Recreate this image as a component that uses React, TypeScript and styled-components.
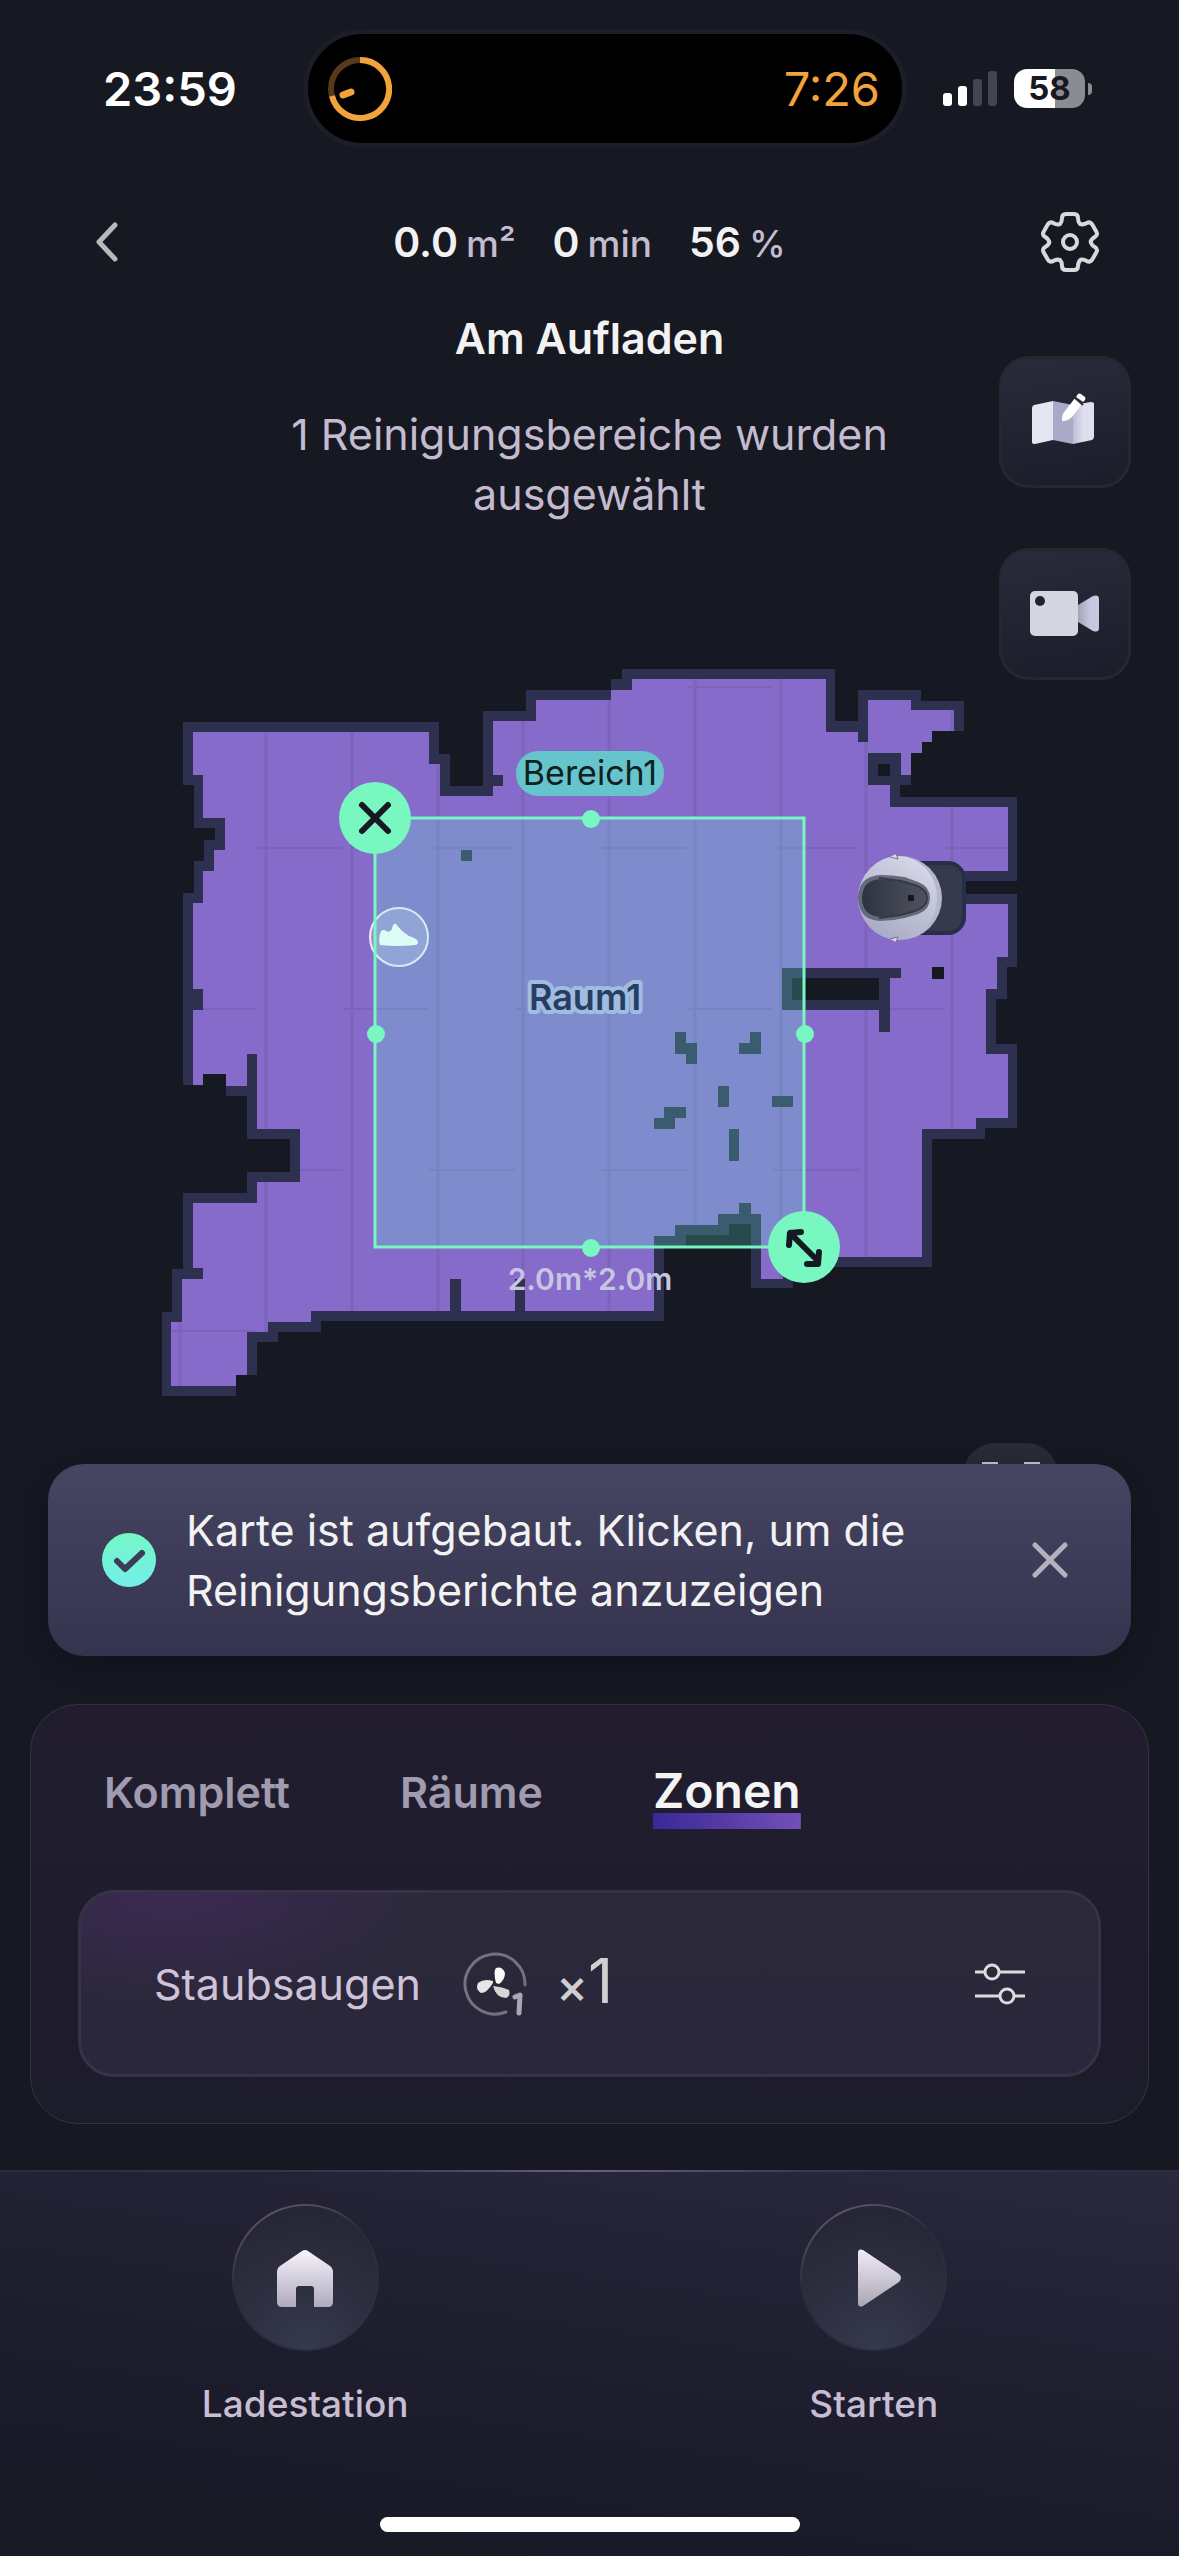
import React, { useState } from "react";
import styled, { createGlobalStyle } from "styled-components";

const GlobalStyle = createGlobalStyle`
  *, *::before, *::after { box-sizing: border-box; }
  body {
    margin: 0;
    background: #161822;
    color: #f2f2f2;
    font-family: Inter, "Liberation Sans", sans-serif;
    -webkit-font-smoothing: antialiased;
  }
  button {
    margin: 0;
    padding: 0;
    border: 0;
    background: none;
    color: inherit;
    font: inherit;
    cursor: pointer;
  }
  svg { display: block; }
  h1, p { margin: 0; }
`;

const Page = styled.div`
  min-height: 100vh;
  display: flex;
  flex-direction: column;
  overflow: hidden;
`;

/* ---------- status bar ---------- */

const StatusBar = styled.div`
  display: flex;
  align-items: center;
  padding: 29px 87px 0 103px;
`;

const Clock = styled.time`
  font-size: 47px;
  font-weight: 600;
  line-height: 60px;
  color: #fff;
`;

const Island = styled.div`
  flex: 1;
  display: flex;
  align-items: center;
  justify-content: space-between;
  height: 119px;
  margin: 0 36px 0 66px;
  padding: 0 22px 0 20px;
  border: 5px solid #1b1d29;
  border-radius: 60px;
  background: #000;
`;

const Countdown = styled.span`
  font-size: 47px;
  line-height: 60px;
  color: #f2a33c;
`;

const Signals = styled.div`
  display: flex;
  align-items: center;
  gap: 17px;
`;

const BatteryGroup = styled.div`
  display: flex;
  align-items: center;
  gap: 3px;
`;

const Battery = styled.div`
  width: 71px;
  height: 39px;
  border-radius: 13px;
  background: linear-gradient(90deg, #fff 58%, #8b8c91 58%);
  color: #161822;
  font-size: 33px;
  font-weight: 700;
  line-height: 39px;
  text-align: center;
`;

const BatteryNub = styled.div`
  width: 4px;
  height: 12px;
  border-radius: 0 6px 6px 0;
  background: #8b8c91;
`;

/* ---------- header ---------- */

const Header = styled.header`
  display: grid;
  grid-template-columns: 1fr auto 1fr;
  align-items: center;
  height: 60px;
  margin-top: 64px;
  padding: 0 79px;
`;

const BackButton = styled.button`
  justify-self: start;
  padding-left: 15px;
`;

const SettingsButton = styled.button`
  justify-self: end;
`;

const Stats = styled.div`
  display: flex;
  gap: 37px;
`;

const Stat = styled.div`
  display: flex;
  align-items: baseline;
  gap: 8px;
  font-size: 41px;
  font-weight: 600;
  line-height: 60px;
`;

const Unit = styled.span`
  font-size: 37px;
  font-weight: 500;
  line-height: 48px;
  color: #c4bbd0;
`;

/* ---------- map area ---------- */

const MapArea = styled.main`
  position: relative;
  padding-top: 36px;
`;

const Title = styled.h1`
  font-size: 43px;
  font-weight: 600;
  line-height: 60px;
  text-align: center;
`;

const Subtitle = styled.p`
  max-width: 660px;
  margin: 36px auto 126px;
  font-size: 43px;
  line-height: 60px;
  text-align: center;
  color: #c4bbd0;
`;

const FloorPlan = styled.svg`
  width: 100%;
  height: auto;
  font-family: Inter, "Liberation Sans", sans-serif;
`;

const MapTools = styled.div`
  position: absolute;
  top: 84px;
  right: 48px;
  display: flex;
  flex-direction: column;
  gap: 60px;
`;

const ToolButton = styled.button`
  display: grid;
  place-items: center;
  width: 132px;
  height: 132px;
  border: 3px solid #252733;
  border-radius: 30px;
  background: linear-gradient(170deg, #292b3a, #1b1d2a);
`;

const FitButton = styled.button`
  position: absolute;
  right: 121px;
  bottom: -74px;
  display: grid;
  place-items: center;
  width: 95px;
  height: 95px;
  border-radius: 32px;
  background: #292b37;
`;

/* ---------- toast ---------- */

const Toast = styled.div`
  position: relative;
  display: flex;
  align-items: center;
  gap: 30px;
  margin: 0 48px;
  padding: 36px 63px 36px 54px;
  border-radius: 36px;
  background: linear-gradient(180deg, #464562, #35334e);
  box-shadow: 0 12px 36px rgba(8, 9, 16, 0.35);
`;

const ToastText = styled.p`
  flex: 1;
  max-width: 780px;
  font-size: 43px;
  line-height: 60px;
`;

const CloseButton = styled.button`
  margin-left: auto;
`;

/* ---------- mode panel ---------- */

const Panel = styled.section`
  margin: 48px 30px 0;
  padding: 56px 47px 46px;
  border: 1px solid #353441;
  border-radius: 48px;
  background: linear-gradient(180deg, #211d2f, #1d1c2b);
`;

const Tabs = styled.div`
  display: flex;
  align-items: baseline;
  gap: 110px;
  padding-left: 26px;
`;

const Tab = styled.button<{ $active: boolean }>`
  padding-bottom: ${(p) => (p.$active ? 8 : 0)}px;
  font-size: ${(p) => (p.$active ? 48 : 43)}px;
  font-weight: 600;
  line-height: 60px;
  color: ${(p) => (p.$active ? "#f4f4f4" : "#a19bb0")};
  background: ${(p) =>
    p.$active
      ? "linear-gradient(90deg, #3a2897, #7350b8) bottom / 100% 16px no-repeat"
      : "none"};
`;

const ModeCard = styled.div`
  display: flex;
  align-items: center;
  height: 187px;
  margin-top: 61px;
  padding: 0 73px;
  border: 3px solid #383148;
  border-radius: 36px;
  background:
    radial-gradient(ellipse 260px 110px at 92px 0, #3c2a54, rgba(60, 42, 84, 0)),
    linear-gradient(180deg, #2b2939, #2b263c);
`;

const ModeName = styled.span`
  margin-right: 41px;
  font-size: 43px;
  line-height: 60px;
  color: #cfc3da;
`;

const Repeat = styled.span`
  display: flex;
  align-items: baseline;
  margin-left: 28px;
  font-size: 62px;
  line-height: 72px;
  color: #cfcfcf;
`;

const Times = styled.span`
  font-size: 48px;
  font-weight: 500;
`;

const AdjustButton = styled.button`
  margin-left: auto;
`;

/* ---------- bottom bar ---------- */

const BottomBar = styled.footer`
  flex: 1;
  margin-top: 46px;
  border-top: 2px solid;
  border-image: linear-gradient(90deg, #2f2940, #3c3350 30%, #6d5d7c 50%, #3c3350 70%, #2f2940) 1;
  background: linear-gradient(188deg, #29283d, #1d1d2d 55%, #171925 90%);
`;

const Actions = styled.nav`
  display: grid;
  grid-template-columns: 1fr 1fr;
  padding: 32px 21px 0;
`;

const Action = styled.button`
  display: flex;
  flex-direction: column;
  align-items: center;
  gap: 29px;
  font-size: 37px;
  font-weight: 500;
  line-height: 48px;
  color: #c8bdd3;
`;

const Disc = styled.span`
  display: grid;
  place-items: center;
  width: 147px;
  height: 147px;
  border: 2px solid transparent;
  border-radius: 50%;
  background:
    radial-gradient(circle at 50% 100%, #363a4e, #2a2b3b 60%, #242433) padding-box,
    linear-gradient(155deg, #5b5669 10%, #2a2a3b 40%, #303347) border-box;
`;

const HomeIndicator = styled.div`
  width: 420px;
  height: 15px;
  margin: 89px auto 24px;
  border-radius: 8px;
  background: #fff;
`;

/* ---------- floor plan data ---------- */

const WALL =
  "183,722 439,722 439,754 450,754 450,786 483,786 483,711 526,711 526,690 611,690 611,679 622,679 622,669 835,669 835,721 858,721 858,690 921,690 921,701 964,701 964,731 932,731 932,742 922,742 922,753 911,753 911,785 900,785 900,797 1017,797 1017,881 950,881 950,894 1017,894 1017,967 1007,967 1007,999 996,999 996,1044 1017,1044 1017,1128 985,1128 985,1139 932,1139 932,1267 793,1267 793,1288 751,1288 751,1224 729,1224 729,1235 686,1235 686,1246 664,1246 664,1321 321,1321 321,1332 278,1332 278,1342 257,1342 257,1375 236,1375 236,1396 162,1396 162,1312 172,1312 172,1269 183,1269 183,1193 247,1193 247,1172 290,1172 290,1139 247,1139 247,1096 226,1096 226,1074 203,1074 203,1085 183,1085 183,893 194,893 194,861 204,861 204,840 215,840 215,828 194,828 194,785 183,785";

const FLOOR =
  "193,732 429,732 429,764 440,764 440,796 493,796 493,721 536,721 536,700 611,700 611,690 632,690 632,679 826,679 826,732 858,732 858,742 868,742 868,700 911,700 911,710 954,710 954,731 932,731 932,742 922,742 922,753 911,753 911,775 901,775 901,753 868,753 868,785 890,785 890,807 1008,807 1008,871 930,871 930,904 1008,904 1008,957 997,957 997,989 986,989 986,1054 1008,1054 1008,1118 976,1118 976,1129 922,1129 922,1257 783,1257 783,1279 761,1279 761,1214 751,1214 751,1203 739,1203 739,1214 718,1214 718,1225 675,1225 675,1236 654,1236 654,1311 311,1311 311,1322 268,1322 268,1332 247,1332 247,1375 236,1375 236,1386 171,1386 171,1322 182,1322 182,1279 203,1279 203,1268 193,1268 193,1203 257,1203 257,1182 300,1182 300,1129 257,1129 257,1054 247,1054 247,1086 226,1086 226,1074 203,1074 203,1085 193,1085 193,1010 203,1010 203,989 193,989 193,903 203,903 203,871 214,871 214,850 225,850 225,818 203,818 203,775 193,775";

// [x, y, width, height]
const OBSTACLES = [
  [493, 775, 10, 11],
  [450, 1279, 11, 32],
  [515, 1279, 10, 32],
  [782, 968, 108, 42],
  [879, 968, 22, 10],
  [879, 1000, 11, 32],
  [461, 850, 11, 11],
  [675, 1032, 11, 22],
  [686, 1043, 11, 21],
  [750, 1032, 11, 22],
  [739, 1043, 11, 11],
  [718, 1086, 11, 21],
  [772, 1096, 21, 11],
  [664, 1107, 22, 11],
  [654, 1118, 21, 11],
  [729, 1129, 10, 32],
];

const VOIDS = [
  [878, 764, 12, 12],
  [792, 978, 87, 22],
  [932, 967, 12, 12],
];

const PLANK_SEAMS = [180, 266, 352, 438, 523, 609, 695, 781, 866, 952];
const PLANK_ENDS: [number, number][] = [
  [687, 171],
  [848, 257],
  [1009, 171],
  [1170, 257],
  [1331, 171],
];

const MINT = "#79f7c1";

function Plan() {
  return (
    <FloorPlan viewBox="0 650 1179 814" role="img" aria-label="Karte mit Raum1 und Bereich1">
      <defs>
        <clipPath id="floor">
          <polygon points={FLOOR} />
        </clipPath>
        <linearGradient id="shell" x1="0.8" y1="0" x2="0.2" y2="1">
          <stop offset="0" stopColor="#d8d9e8" />
          <stop offset="1" stopColor="#a5a8c2" />
        </linearGradient>
        <linearGradient id="visor" x1="0" y1="0" x2="1" y2="0">
          <stop offset="0" stopColor="#2d3240" />
          <stop offset="1" stopColor="#50535f" />
        </linearGradient>
      </defs>

      <polygon points={WALL} fill="#2d304e" />
      <polygon points={FLOOR} fill="#866bca" />
      <g clipPath="url(#floor)" stroke="#7c64ba" strokeWidth="3">
        {PLANK_SEAMS.map((x) => (
          <line key={x} x1={x} y1="660" x2={x} y2="1400" />
        ))}
        {PLANK_ENDS.map(([y, x]) => (
          <line key={y} x1={x} y1={y} x2="1020" y2={y} strokeWidth="2" strokeDasharray="86 86" />
        ))}
      </g>
      {OBSTACLES.map(([x, y, w, h]) => (
        <rect key={`${x}-${y}`} x={x} y={y} width={w} height={h} fill="#2d304e" />
      ))}
      {VOIDS.map(([x, y, w, h]) => (
        <rect key={`${x}-${y}`} x={x} y={y} width={w} height={h} fill="#161822" />
      ))}

      {/* doorstep marker */}
      <circle cx="399" cy="937" r="29" fill="#fff" fillOpacity="0.22" stroke="#f4ecfb" strokeWidth="2" />
      <path
        d="M381 931q3-2 5 0 4 2 6-2 1-6 4-5 5 7 13 12 9 3 9 6 0 3-3 3-18 2-35 0-2-7 1-14z"
        fill="#fff"
      />

      {/* room name */}
      <text
        x="585"
        y="1010"
        textAnchor="middle"
        fontSize="36"
        fontWeight="600"
        fill="#16063f"
        stroke="#b4abe4"
        strokeWidth="8"
        strokeLinejoin="round"
        paintOrder="stroke"
      >
        Raum1
      </text>

      {/* docked robot */}
      <rect x="902" y="863" width="62" height="70" rx="16" fill="#353b4d" stroke="#272f48" strokeWidth="4" />
      <circle cx="900" cy="898" r="42" fill="#b4b7cf" />
      <ellipse cx="898" cy="898" rx="39" ry="42" fill="url(#shell)" />
      <path d="M890 857l8 2-2-5M890 939l8-2-2 5" fill="#d8d9e8" stroke="#6f7390" strokeWidth="1" />
      <path
        d="M862 888q4-10 18-11 12 0 24 2l14 5q10 4 10 14t-10 14l-14 4q-12 3-24 3-14-1-18-11-4-10 0-20z"
        fill="url(#visor)"
        stroke="#646a79"
        strokeWidth="4"
      />
      <path d="M879 878l22 3 14 4q12 4 12 13t-12 13l-14 4-22 3" fill="none" stroke="#363a47" strokeWidth="2" />
      <rect x="908" y="895" width="6" height="6" rx="1" fill="#14161d" />

      {/* selected zone */}
      <rect x="375" y="818" width="429" height="429" fill="rgba(100,247,215,0.23)" stroke={MINT} strokeWidth="3" />
      <circle cx="591" cy="819" r="9" fill={MINT} />
      <circle cx="376" cy="1034" r="9" fill={MINT} />
      <circle cx="805" cy="1034" r="9" fill={MINT} />
      <circle cx="591" cy="1248" r="9" fill={MINT} />

      <rect x="516" y="751" width="148" height="45" rx="22" fill="#66c5cc" />
      <text x="590" y="785" textAnchor="middle" fontSize="34" fill="#10201f">
        Bereich1
      </text>
      <text x="590" y="1290" textAnchor="middle" fontSize="30" fontWeight="600" fill="#c7c6e2">
        2.0m*2.0m
      </text>

      <g>
        <circle cx="375" cy="818" r="36" fill={MINT} />
        <path d="M362 805l26 26M388 805l-26 26" stroke="#161822" strokeWidth="6" strokeLinecap="round" />
      </g>
      <g>
        <circle cx="804" cy="1247" r="36" fill={MINT} />
        <path
          d="M790 1233l28 28M789 1245l1-12 11-1M819 1252l-1 12-11 0"
          fill="none"
          stroke="#161822"
          strokeWidth="6"
          strokeLinecap="round"
          strokeLinejoin="round"
        />
      </g>
    </FloorPlan>
  );
}

/* ---------- icons ---------- */

const TimerRing = () => (
  <svg width="64" height="64" viewBox="0 0 64 64" fill="none" aria-hidden="true">
    <circle cx="32" cy="32" r="29" stroke="#573b18" strokeWidth="6" />
    <path d="M32 3A29 29 0 1 1 4 39" stroke="#f2a33c" strokeWidth="6" />
    <path d="M23 35l-8 3" stroke="#f2a33c" strokeWidth="7" strokeLinecap="round" />
  </svg>
);

const SignalBars = () => (
  <svg width="54" height="35" viewBox="0 0 54 35" aria-label="Mobilfunk 2 von 4">
    <rect x="0" y="22" width="9" height="13" rx="3" fill="#fff" />
    <rect x="15" y="15" width="9" height="20" rx="3" fill="#fff" />
    <rect x="30" y="8" width="9" height="27" rx="3" fill="#44454e" />
    <rect x="45" y="0" width="9" height="35" rx="3" fill="#44454e" />
  </svg>
);

const BackIcon = () => (
  <svg width="26" height="42" viewBox="0 0 26 42" fill="none" aria-hidden="true">
    <path d="M21 4L5 21l16 17" stroke="#b9b9bb" strokeWidth="5" strokeLinecap="round" strokeLinejoin="round" />
  </svg>
);

// One tooth of the gear, pointing up from the centre; six turned copies close the outline.
const TOOTH: [string, number[]][] = [
  ["C", [-8, -20, -8, -22, -8, -24]],
  ["Q", [-8, -28, -4, -28]],
  ["L", [4, -28]],
  ["Q", [8, -28, 8, -24]],
  ["C", [8, -22, 8, -20, 10, -18]],
];

const gearOutline = () => {
  const turn = (points: number[], degrees: number) => {
    const a = (degrees * Math.PI) / 180;
    const out: string[] = [];
    for (let i = 0; i < points.length; i += 2) {
      const [x, y] = [points[i], points[i + 1]];
      out.push(`${x * Math.cos(a) - y * Math.sin(a)} ${x * Math.sin(a) + y * Math.cos(a)}`);
    }
    return out.join(" ");
  };
  let d = "M-10 -18";
  for (let i = 0; i < 6; i++) {
    for (const [command, points] of TOOTH) d += command + turn(points, i * 60);
  }
  return d + "Z";
};

const GEAR = gearOutline();

const GearIcon = () => (
  <svg
    width="60"
    height="60"
    viewBox="-30 -30 60 60"
    fill="none"
    stroke="#d9d9d9"
    strokeWidth="4"
    strokeLinejoin="round"
    aria-hidden="true"
  >
    <path d={GEAR} />
    <circle r="7" />
  </svg>
);

const MapEditIcon = () => (
  <svg width="66" height="58" viewBox="0 0 66 58" aria-hidden="true">
    <defs>
      <linearGradient id="fold" x1="0" x2="1">
        <stop offset="0" stopColor="#bcbdd6" />
        <stop offset="0.5" stopColor="#e0dfee" />
      </linearGradient>
    </defs>
    <path d="M0 15q0-2 2-3l19-4v39L3 51q-3 0-3-2z" fill="#e6e5f2" />
    <path d="M21 8l20 4v39l-20-4z" fill="#a9a9c8" />
    <path d="M41 12l18-3q3 0 3 2v33q0 2-2 3l-19 4z" fill="url(#fold)" />
    <path d="M30 27q0-6 3-9L43 5l7 6-10 13q-3 3-8 4-2 1-2-1z" fill="#fff" />
    <path d="M42 4l9 8" stroke="#2a2c3b" strokeWidth="2" />
    <path d="M46 1q1-1 3 0l4 3q1 1 0 3l-2 2-7-5z" fill="#fff" />
  </svg>
);

const CameraIcon = () => (
  <svg width="70" height="46" viewBox="0 0 70 46" aria-hidden="true">
    <defs>
      <linearGradient id="lens" x1="0" x2="1">
        <stop offset="0" stopColor="#a3a3b8" />
        <stop offset="0.6" stopColor="#c9c8e0" />
      </linearGradient>
    </defs>
    <path d="M48 14l15-9q6-2 6 3v29q0 5-6 3l-15-9z" fill="url(#lens)" />
    <rect x="0" y="0" width="48" height="45" rx="5" fill="#d4d5e1" />
    <circle cx="10" cy="10" r="5" fill="#222432" />
  </svg>
);

const FitIcon = () => (
  <svg width="58" height="58" viewBox="0 0 58 58" fill="none" stroke="#c9c9cd" strokeWidth="4" aria-hidden="true">
    <path d="M2 16V2h14M42 2h14v14M56 42v14H42M16 56H2V42" />
  </svg>
);

const CheckIcon = () => (
  <svg width="54" height="54" viewBox="0 0 54 54" aria-hidden="true">
    <defs>
      <linearGradient id="check" x1="0" y1="0" x2="0" y2="1">
        <stop offset="0" stopColor="#75f8c4" />
        <stop offset="1" stopColor="#72eeea" />
      </linearGradient>
    </defs>
    <circle cx="27" cy="27" r="27" fill="url(#check)" />
    <path d="M15 28l8 8 17-16" fill="none" stroke="#3d3c58" strokeWidth="6" strokeLinecap="round" strokeLinejoin="round" />
  </svg>
);

const CloseIcon = () => (
  <svg width="36" height="36" viewBox="0 0 36 36" aria-hidden="true">
    <path d="M3 3l30 30M33 3L3 33" stroke="#b2b1bd" strokeWidth="5" strokeLinecap="round" />
  </svg>
);

const FanIcon = () => (
  <svg width="66" height="66" viewBox="-1 -1 66 66" fill="none" aria-label="Saugstufe 1">
    <path d="M62 33A30 30 0 1 0 43 60" stroke="#757180" strokeWidth="3" strokeLinecap="round" />
    <path d="M33 31q-3-12 0-15 6-2 9 5 0 7-6 11z" fill="#fafafa" />
    <path d="M30 31q-6 10-12 10-6-4-3-10 6-5 15-2z" fill="#e6e6e6" />
    <path d="M30 34q3 12 13 12 5-2 3-8-6-3-16-4z" fill="#d6d6d6" />
    <path d="M52 45l5-2-1 18" stroke="#aaa6b4" strokeWidth="5" strokeLinecap="round" strokeLinejoin="round" />
  </svg>
);

const SlidersIcon = () => (
  <svg width="50" height="42" viewBox="0 0 50 42" fill="none" stroke="#dcdcde" strokeWidth="3" aria-hidden="true">
    <path d="M0 9h10M24 9h26M0 33h25M39 33h11" />
    <circle cx="17" cy="9" r="7" />
    <circle cx="32" cy="33" r="7" />
  </svg>
);

const HomeIcon = () => (
  <svg width="56" height="58" viewBox="0 0 56 58" aria-hidden="true">
    <defs>
      <linearGradient id="home" x1="0" y1="0" x2="0" y2="1">
        <stop offset="0" stopColor="#f8f4fb" />
        <stop offset="1" stopColor="#b0aac0" />
      </linearGradient>
    </defs>
    <path d="M25 2q3-2 6 0l22 15q3 2 3 5v31q0 5-5 5H37V40q0-3-3-3H22q-3 0-3 3v18H5q-5 0-5-5V22q0-3 3-5z" fill="url(#home)" />
  </svg>
);

const PlayIcon = () => (
  <svg width="58" height="58" viewBox="0 0 58 58" aria-hidden="true">
    <defs>
      <linearGradient id="play" x1="0" y1="0" x2="0" y2="1">
        <stop offset="0" stopColor="#f0eaf6" />
        <stop offset="1" stopColor="#a9a7b3" />
      </linearGradient>
    </defs>
    <path d="M13 4q0-5 5-3l36 24q4 4 0 8L18 57q-5 2-5-3z" fill="url(#play)" />
  </svg>
);

/* ---------- app ---------- */

const TABS = ["Komplett", "Räume", "Zonen"];
const STATS = [
  ["0.0", "m²"],
  ["0", "min"],
  ["56", "%"],
];

export default function App() {
  const [tab, setTab] = useState("Zonen");

  return (
    <Page>
      <GlobalStyle />
      <StatusBar>
        <Clock>23:59</Clock>
        <Island>
          <TimerRing />
          <Countdown>7:26</Countdown>
        </Island>
        <Signals>
          <SignalBars />
          <BatteryGroup>
            <Battery>58</Battery>
            <BatteryNub />
          </BatteryGroup>
        </Signals>
      </StatusBar>

      <Header>
        <BackButton aria-label="Zurück">
          <BackIcon />
        </BackButton>
        <Stats>
          {STATS.map(([value, unit]) => (
            <Stat key={unit}>
              {value}
              <Unit>{unit}</Unit>
            </Stat>
          ))}
        </Stats>
        <SettingsButton aria-label="Einstellungen">
          <GearIcon />
        </SettingsButton>
      </Header>

      <MapArea>
        <Title>Am Aufladen</Title>
        <Subtitle>1 Reinigungsbereiche wurden ausgewählt</Subtitle>
        <Plan />
        <MapTools>
          <ToolButton aria-label="Karte bearbeiten">
            <MapEditIcon />
          </ToolButton>
          <ToolButton aria-label="Kamera">
            <CameraIcon />
          </ToolButton>
        </MapTools>
        <FitButton aria-label="Karte einpassen">
          <FitIcon />
        </FitButton>
      </MapArea>

      <Toast role="status">
        <CheckIcon />
        <ToastText>Karte ist aufgebaut. Klicken, um die Reinigungsberichte anzuzeigen</ToastText>
        <CloseButton aria-label="Schließen">
          <CloseIcon />
        </CloseButton>
      </Toast>

      <Panel>
        <Tabs role="tablist">
          {TABS.map((name) => (
            <Tab key={name} role="tab" aria-selected={tab === name} $active={tab === name} onClick={() => setTab(name)}>
              {name}
            </Tab>
          ))}
        </Tabs>
        <ModeCard>
          <ModeName>Staubsaugen</ModeName>
          <FanIcon />
          <Repeat>
            <Times>×</Times>1
          </Repeat>
          <AdjustButton aria-label="Anpassen">
            <SlidersIcon />
          </AdjustButton>
        </ModeCard>
      </Panel>

      <BottomBar>
        <Actions>
          <Action>
            <Disc>
              <HomeIcon />
            </Disc>
            Ladestation
          </Action>
          <Action>
            <Disc>
              <PlayIcon />
            </Disc>
            Starten
          </Action>
        </Actions>
        <HomeIndicator />
      </BottomBar>
    </Page>
  );
}
